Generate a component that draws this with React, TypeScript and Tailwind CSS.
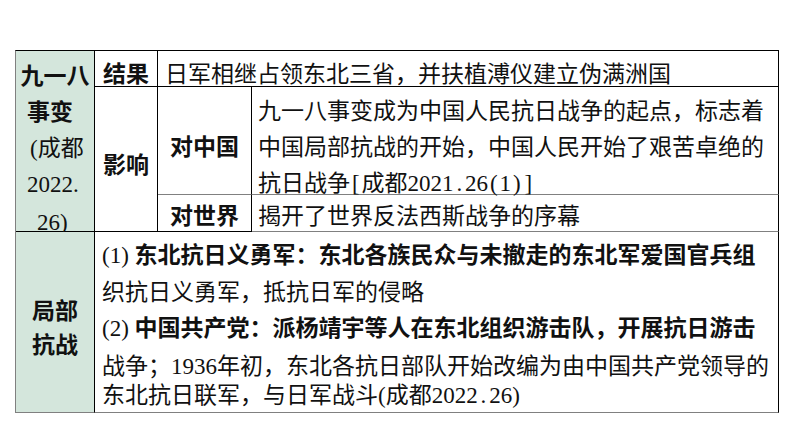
function H({ c }: { c: string }) {
  // half-width character drawn on a fixed half-em advance, like the slide's font
  return <span className="inline-block w-[11.5px] text-center">{c}</span>;
}

export default function App() {
  const cell = "border-r border-b border-r-black";

  return (
    <div className="w-[794px] h-[447px] bg-white pt-[50px] pl-[15px] text-[23px] leading-[36px] text-[#111] font-['Liberation_Serif','Noto_Sans_CJK_SC',serif]">
      <div className="grid w-[764px] grid-cols-[79px_63px_94px_527px] grid-rows-[36px_108px_37px_181px] border-t border-l border-t-black border-l-[#808080]">
        {/* 九一八事变 */}
        <div className={`${cell} row-span-3 bg-[#d4e6dc] border-b-black pt-[8px] whitespace-nowrap`}>
          <div className="text-center font-bold">九一八</div>
          <div className="pl-[11px] font-bold">事变</div>
          <div className="pl-[14px]">(成都</div>
          <div className="pl-[11px]">2022.</div>
          <div className="pl-[21px] mt-[2px]">26)</div>
        </div>

        {/* 结果 */}
        <div className={`${cell} border-b-black pt-[6px] text-center font-bold`}>结果</div>
        <div className={`${cell} col-span-2 border-b-black pt-[6px] pl-[7px] whitespace-nowrap`}>
          日军相继占领东北三省，并扶植溥仪建立伪满洲国
        </div>

        {/* 影响 */}
        <div className={`${cell} row-span-2 border-b-black pt-[61px] text-center font-bold`}>影响</div>
        <div className={`${cell} border-b-[#808080] pt-[43px] text-center font-bold`}>对中国</div>
        <div className={`${cell} border-b-[#808080] pt-[7px] pl-[6px] whitespace-nowrap`}>
          <div>九一八事变成为中国人民抗日战争的起点，标志着</div>
          <div>中国局部抗战的开始，中国人民开始了艰苦卓绝的</div>
          <div>
            抗日战争<H c="[" />成都2021<H c="." />26<H c="(" />1<H c=")" /><H c="]" />
          </div>
        </div>
        <div className={`${cell} border-b-black pt-[4px] text-center font-bold`}>对世界</div>
        <div className={`${cell} border-b-[#808080] pt-[4px] pl-[6px] whitespace-nowrap`}>
          揭开了世界反法西斯战争的序幕
        </div>

        {/* 局部抗战 */}
        <div className={`${cell} bg-[#d4e6dc] border-b-[#808080] pt-[63px] text-center font-bold leading-[34px]`}>
          <div>局部</div>
          <div>抗战</div>
        </div>
        <div className={`${cell} col-span-3 border-b-[#808080] pt-[6px] pl-[7px] whitespace-nowrap`}>
          <div className="h-[37px] font-bold">
            <span className="font-normal">(1) </span>东北抗日义勇军：东北各族民众与未撤走的东北军爱国官兵组
          </div>
          <div className="h-[36px]">织抗日义勇军，抵抗日军的侵略</div>
          <div className="h-[38px] font-bold">
            <span className="font-normal">(2) </span>中国共产党：派杨靖宇等人在东北组织游击队，开展抗日游击
          </div>
          <div className="h-[29px]">战争；1936年初，东北各抗日部队开始改编为由中国共产党领导的</div>
          <div className="h-[36px]">
            东北抗日联军，与日军战斗(成都2022<H c="." />26)
          </div>
        </div>
      </div>
    </div>
  );
}
